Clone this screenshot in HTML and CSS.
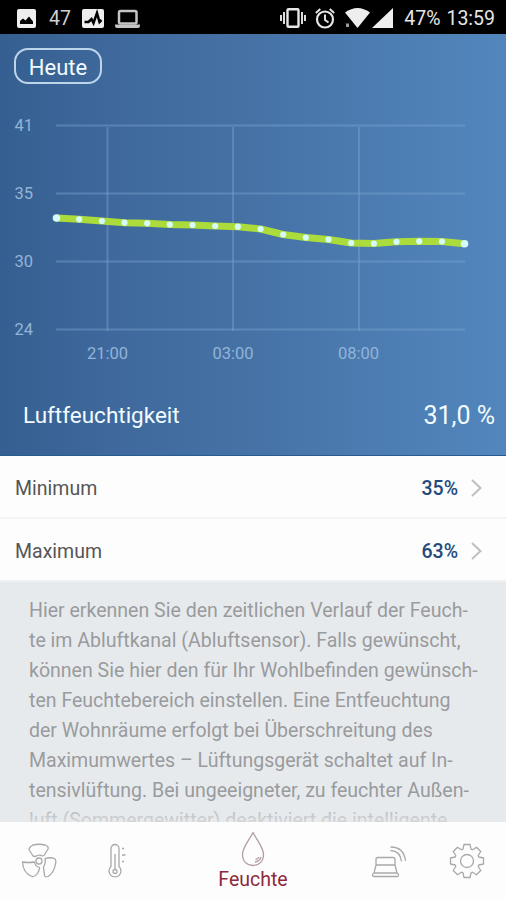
FILE: index.html
```
<!DOCTYPE html>
<html lang="de">
<head>
    <meta charset="UTF-8">
    <meta name="viewport" content="width=device-width, initial-scale=1.0">
    <title>Luftfeuchtigkeit</title>
    <link rel="stylesheet" href="styles.css">
</head>
<body>

<div class="status-bar">
    <svg class="status-icon" width="19" height="19" viewBox="0 0 19 19">
        <rect width="19" height="19" rx="2" fill="#eee"/>
        <path d="M3 15v-3l3-2.500 2.500 2 3.500-4 4 5v2.500z" fill="#000"/>
    </svg>
    <span class="status-temp">47</span>
    <svg class="status-icon" width="22" height="19" viewBox="0 0 22 19">
        <rect width="22" height="19" rx="2" fill="#eee"/>
        <path d="M2.500 13h4l3-3 2 4 3.500-10 2.500 9 2-2" fill="none" stroke="#000" stroke-width="2.500"/>
    </svg>
    <svg class="laptop" width="25" height="19" viewBox="0 0 25 19">
        <rect x="4" y="2" width="17.500" height="12.500" rx="1.500" fill="none" stroke="#c4c4c4" stroke-width="2.500"/>
        <path d="M0 15.500h25v1.500q0 2-2 2h-21q-2 0-2-2z" fill="#c4c4c4"/>
    </svg>
    <div class="status-right">
        <svg width="26" height="20" viewBox="0 0 26 20">
            <rect x="7.500" y="1.200" width="11" height="17.600" rx="1" fill="none" stroke="#e6e6e6" stroke-width="2.400"/>
            <path d="M4 4v12M1 7v6M22 4v12M25 7v6" stroke="#e6e6e6" stroke-width="1.900"/>
        </svg>
        <svg class="alarm" width="20" height="21" viewBox="0 0 20 21">
            <circle cx="10" cy="11.500" r="8" fill="none" stroke="#e6e6e6" stroke-width="2.200"/>
            <path d="M10 6.500v5.500l3.500 2.500M.8 5l4.500-4M19.200 5l-4.500-4" fill="none" stroke="#e6e6e6" stroke-width="1.900"/>
        </svg>
        <svg class="wifi" width="25" height="20" viewBox="0 0 25 20">
            <path d="M0 4.500Q12.500-4.500 25 4.500L12.500 20z" fill="#eee"/>
            <rect x="1" y="15.500" width="3" height="3.500" fill="#999"/>
        </svg>
        <svg class="signal" width="21" height="20" viewBox="0 0 21 20">
            <path d="M21 0v20H0z" fill="#eee"/>
        </svg>
        <span>47%</span>
        <span class="clock">13:59</span>
    </div>
</div>

<div class="chart-panel">
    <button class="today-btn">Heute</button>

    <!-- Verlauf der Luftfeuchtigkeit -->
    <svg class="chart" width="506" height="290" viewBox="0 84 506 290">
        <g class="grid">
            <path d="M56 125.500h409M56 193.500h409M56 261.500h409M56 329.500h409"/>
            <path d="M107.500 127v204M233 127v204M359 127v204"/>
        </g>
        <g class="axis">
            <text x="14.500" y="131">41</text>
            <text x="14.500" y="199">35</text>
            <text x="14.500" y="267">30</text>
            <text x="14.500" y="335">24</text>
            <text x="107.500" y="359" text-anchor="middle">21:00</text>
            <text x="233" y="359" text-anchor="middle">03:00</text>
            <text x="358.500" y="359" text-anchor="middle">08:00</text>
        </g>
        <polyline class="curve" points=""/>
        <g class="dots"></g>
    </svg>

    <div class="current">
        <span class="current-label">Luftfeuchtigkeit</span>
        <span class="current-value">31,0 %</span>
    </div>
</div>

<div class="row">
    <span class="row-label">Minimum</span>
    <span class="row-value">35%</span>
    <svg class="chevron" width="11" height="18" viewBox="0 0 11 18"><path d="M1 1l8.500 8L1 17"/></svg>
</div>
<div class="row row-last">
    <span class="row-label">Maximum</span>
    <span class="row-value">63%</span>
    <svg class="chevron" width="11" height="18" viewBox="0 0 11 18"><path d="M1 1l8.500 8L1 17"/></svg>
</div>

<div class="info">
    <p>Hier erkennen Sie den zeitlichen Verlauf der Feuch-<br>
    te im Abluftkanal (Abluftsensor). Falls gewünscht,<br>
    können Sie hier den für Ihr Wohlbefinden gewünsch-<br>
    ten Feuchtebereich einstellen. Eine Entfeuchtung<br>
    der Wohnräume erfolgt bei Überschreitung des<br>
    Maximumwertes – Lüftungsgerät schaltet auf In-<br>
    tensivlüftung. Bei ungeeigneter, zu feuchter Außen-<br>
    luft (Sommergewitter) deaktiviert die intelligente</p>
</div>

<nav class="tab-bar">
    <a class="tab">
        <svg width="36" height="36" viewBox="-18 -18 36 36">
            <circle r="3"/>
            <path d="M-6-5L-10-11.500Q-10-13.500-6-16Q0-17.500 6-16Q10-14.500 9-12L5-5.500L3.500-5Q0-7-3.500-4.500z"/>
            <path d="M-16.500 1Q-11 2-4.500 1Q-4 5 .5 6.500Q1 8-2 13Q-4 16-7 15.500Q-16 12-16.500 1z"/>
            <path d="M6-2.500Q11-4 15.500-2.500Q17.500-1 16.500 3Q15 12 9 15.500Q6 16.500 5.500 14.500L4.500 6Q7 2 6-2.500z"/>
        </svg>
    </a>
    <a class="tab">
        <svg width="18" height="36" viewBox="0 0 18 36">
            <path d="M3 23.500V5.500a4 4 0 0 1 8 0V23.500a6 6 0 1 1-8 0z"/>
            <circle cx="7" cy="28.500" r="2"/>
            <path d="M7 26.500V11M14 5.500h2M14 12h3.500M14 18.500h2"/>
        </svg>
    </a>
    <a class="tab active">
        <svg width="24" height="36" viewBox="0 0 24 36">
            <path d="M12 1.500C9 8 1.500 16 1.500 23.500C1.500 30.500 6 34.500 12 34.500S22.500 30.500 22.500 23.500C22.500 16 15 8 12 1.500z"/>
            <path d="M14 31q5-1 6-5M14.500 28.500q2.500-.5 3.500-2.500"/>
        </svg>
        <span>Feuchte</span>
    </a>
    <a class="tab">
        <svg width="36" height="36" viewBox="0 0 36 36">
            <path d="M5 16.500q0-2 2-2h15q2 0 2 2v5.500h-19zM5 22h19l2 8h-23zM3 30h23q1.500 0 1.500 2t-1.500 1.500h-23q-1.500 0-1.500-1.500t1.500-2z"/>
            <path d="M19.500 7.500q10 .5 11 11M19.500 4q13.500 0 15 14"/>
        </svg>
    </a>
    <a class="tab">
        <svg width="36" height="36" viewBox="-18 -18 36 36">
            <circle r="6.500"/>
            <path d="M-4-11.800L-3-16.500H3L4-11.800L5.500-11.200L9.500-13.800L13.800-9.500L11.200-5.500L11.800-4L16.500-3V3L11.800 4L11.200 5.500L13.800 9.500L9.500 13.800L5.500 11.200L4 11.800L3 16.500H-3L-4 11.800L-5.500 11.200L-9.500 13.800L-13.800 9.500L-11.200 5.500L-11.800 4L-16.500 3V-3L-11.800-4L-11.200-5.500L-13.800-9.500L-9.500-13.800L-5.500-11.200z"/>
        </svg>
    </a>
</nav>

<script src="script.js"></script>

</body>
</html>
```
FILE: styles.css
```
body {
    font-family: Roboto, sans-serif;
    margin: 0;
    height: 900px;
    display: flex;
    flex-direction: column;
    overflow: hidden;
    background-color: #fdfdfd;
}
svg {
    display: block;
    flex-shrink: 0;
}

/* Statusleiste */
.status-bar {
    height: 34px;
    flex-shrink: 0;
    box-sizing: border-box;
    padding: 2px 11px 0 17px;
    display: flex;
    align-items: center;
    background-color: #000;
    color: #e6e6e6;
    font-size: 19.5px;
}
.status-temp {
    margin: 0 11px 0 13px;
    color: #d0d0d0;
}
.laptop {
    margin-left: 11px;
}
.status-right {
    margin-left: auto;
    display: flex;
    align-items: center;
}
.alarm {
    margin-left: 9px;
}
.wifi {
    margin-left: 10px;
}
.signal {
    margin: 0 11px 0 2px;
}
.clock {
    margin-left: 6px;
}

/* Diagramm */
.chart-panel {
    height: 422px;
    flex-shrink: 0;
    box-sizing: border-box;
    padding-top: 14px;
    background: linear-gradient(to right, #355f90 0%, #3f699c 22%, #4672a6 50%, #4d7eb3 78%, #5286bc 100%);
    border-bottom: 1px solid #285b8f;
    color: #f2fbff;
}
.today-btn {
    display: block;
    width: 88px;
    height: 36px;
    margin-left: 14px;
    padding: 2px 0 0;
    font-family: inherit;
    font-size: 22px;
    color: #f2fbff;
    background: none;
    border: 2px solid #bdd5ea;
    border-radius: 14px;
}
.grid path {
    fill: none;
    stroke: #7fa8d4;
    stroke-opacity: 0.42;
    stroke-width: 2;
}
.axis text {
    font-size: 16.5px;
    fill: #92b4d8;
}
.curve {
    fill: none;
    stroke: #acdc3c;
    stroke-width: 7;
    stroke-linejoin: round;
}
.dots circle {
    fill: #d4fbfa;
}
.current {
    display: flex;
    justify-content: space-between;
    align-items: center;
    height: 82px;
    padding: 0 11px 0 23px;
}
.current-label {
    font-size: 22.5px;
}
.current-value {
    font-size: 25px;
}

/* Grenzwerte */
.row {
    height: 63px;
    flex-shrink: 0;
    box-sizing: border-box;
    padding: 3px 24px 0 15px;
    display: flex;
    align-items: center;
    border-bottom: 2px solid #f3f4f5;
    font-size: 19.5px;
    color: #555;
}
.row-last {
    border-bottom-color: #eef0f1;
}
.row-value {
    margin-left: auto;
    font-weight: 500;
    color: #244a7c;
}
.chevron {
    margin-left: 13px;
}
.chevron path {
    fill: none;
    stroke: #bfbfbf;
    stroke-width: 2;
}

.info {
    flex: 1;
    overflow: hidden;
    position: relative;
    background-color: #e7eaed;
    color: #999b9d;
}
/* Text blendet zum unteren Rand hin aus */
.info::after {
    content: "";
    position: absolute;
    left: 0;
    right: 0;
    bottom: 0;
    height: 18px;
    background: linear-gradient(rgba(231, 234, 237, 0.2), rgba(231, 234, 237, 0.75));
}
.info p {
    margin: 14px 0 0 29px;
    font-size: 19.55px;
    line-height: 30px;
    white-space: nowrap;
}

/* Navigation */
.tab-bar {
    height: 78px;
    flex-shrink: 0;
    display: grid;
    grid-template-columns: 78px 78px 194px 78px 78px;
    background-color: #fdfdfd;
}
.tab {
    display: flex;
    flex-direction: column;
    align-items: center;
    justify-content: center;
    color: #8c2a3c;
    font-size: 19.5px;
    line-height: 26px;
}
.tab svg {
    fill: none;
    stroke: #a9a9a9;
    stroke-width: 1.3;
    stroke-linejoin: round;
}
.active {
    padding-top: 2px;
}
.active svg {
    stroke: #b39da0;
}
```
FILE: script.js
```
// Messwerte als y-Positionen, gleichmäßig über die Zeitachse verteilt
const werte = [218, 219.3, 221, 222.7, 223.3, 224.5, 225, 226, 226.7, 229,
    234.5, 237.5, 239.5, 243, 243.5, 241.8, 241.3, 241.5, 243.7];
const punkte = werte.map((y, i) => [56.5 + i * 22.67, y]);

document.querySelector('.curve').setAttribute('points', punkte.join(' '));
document.querySelector('.dots').innerHTML = punkte
    .map(([x, y], i) => `<circle cx="${x}" cy="${y}" r="${i === 0 || i === punkte.length - 1 ? 3.8 : 3.1}"/>`)
    .join('');
```
